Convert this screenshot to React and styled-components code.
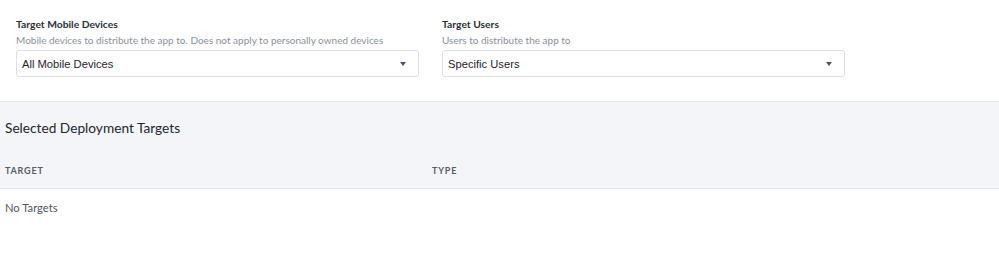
import React from 'react'
import styled, { createGlobalStyle } from 'styled-components'

const GlobalStyle = createGlobalStyle`
  body {
    margin: 0;
    background: #ffffff;
    font-family: Lato, "Open Sans", sans-serif;
  }
`

const Page = styled.div`
  width: 999px;
`

const Fields = styled.div`
  display: grid;
  grid-template-columns: 403px 403px;
  column-gap: 23px;
  padding: 18px 16px 24px;
`

const Field = styled.div`
  display: flex;
  flex-direction: column;
`

const Label = styled.div`
  font-size: 10.3px;
  font-weight: 700;
  color: #2b2f36;
  line-height: 12px;
  white-space: nowrap;
`

const Hint = styled.div`
  margin-top: 4px;
  font-size: 10px;
  color: #8a8f98;
  line-height: 12px;
  white-space: nowrap;
`

const Select = styled.div`
  margin-top: 4px;
  height: 27px;
  box-sizing: border-box;
  border: 1px solid #dcdfe4;
  border-radius: 3px;
  display: flex;
  align-items: center;
  justify-content: space-between;
  padding: 0 12px 0 5px;
  font-family: "Liberation Sans", Arial, sans-serif;
  font-size: 11.2px;
  color: #1f2329;
`

const Caret = styled.span`
  width: 0;
  height: 0;
  border-left: 3.5px solid transparent;
  border-right: 3.5px solid transparent;
  border-top: 4px solid #4a5468;
`

const Targets = styled.section`
  border-top: 1px solid #e4e6ea;
`

const TargetsHead = styled.div`
  background: #f4f5f8;
  padding: 17px 5px 0;
  border-bottom: 1px solid #e6e8eb;
`

const Title = styled.h2`
  margin: 0;
  font-size: 13.7px;
  font-weight: 400;
  color: #22262d;
  line-height: 18px;
`

const Columns = styled.div`
  display: grid;
  grid-template-columns: 427px 1fr;
  padding: 28px 0 11px;
`

const ColHead = styled.div`
  font-size: 9px;
  font-weight: 700;
  letter-spacing: 0.8px;
  color: #555b68;
  line-height: 12px;
`

const Empty = styled.div`
  padding: 11px 5px;
  font-size: 11.2px;
  color: #4f545c;
  line-height: 16px;
`

const fields = [
  {
    label: 'Target Mobile Devices',
    hint: 'Mobile devices to distribute the app to. Does not apply to personally owned devices',
    value: 'All Mobile Devices',
  },
  {
    label: 'Target Users',
    hint: 'Users to distribute the app to',
    value: 'Specific Users',
  },
]

export default function App() {
  return (
    <Page>
      <GlobalStyle />
      <Fields>
        {fields.map((f) => (
          <Field key={f.label}>
            <Label>{f.label}</Label>
            <Hint>{f.hint}</Hint>
            <Select>
              {f.value}
              <Caret />
            </Select>
          </Field>
        ))}
      </Fields>
      <Targets>
        <TargetsHead>
          <Title>Selected Deployment Targets</Title>
          <Columns>
            <ColHead>TARGET</ColHead>
            <ColHead>TYPE</ColHead>
          </Columns>
        </TargetsHead>
        <Empty>No Targets</Empty>
      </Targets>
    </Page>
  )
}
